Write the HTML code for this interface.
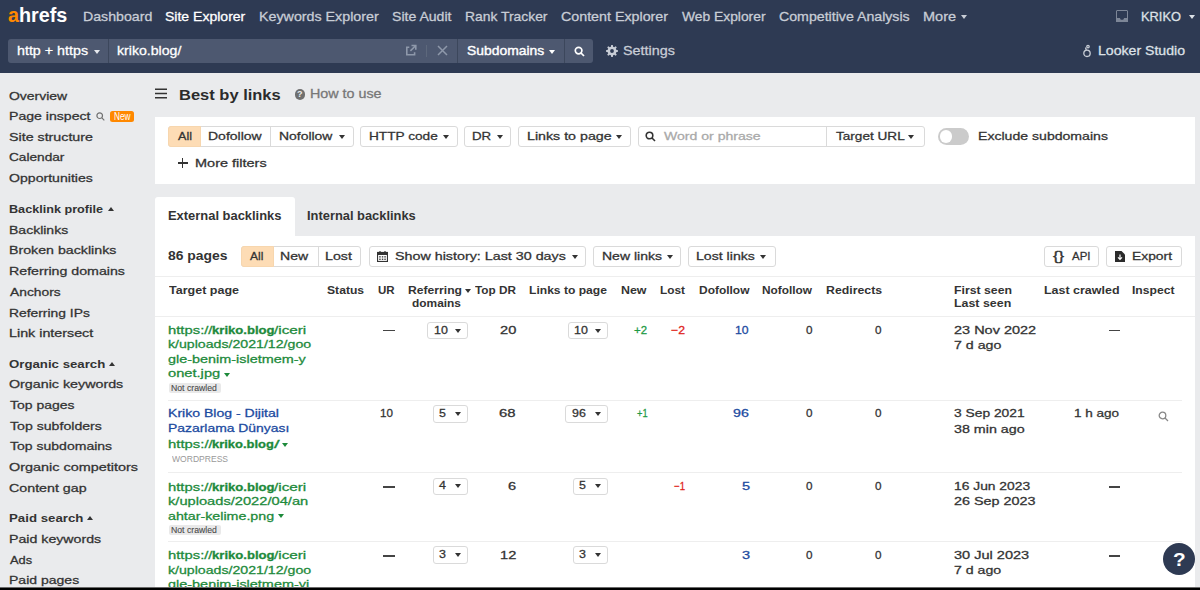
<!DOCTYPE html>
<html><head><meta charset="utf-8"><style>
html,body{margin:0;padding:0;width:1200px;height:590px;overflow:hidden;position:relative;font-family:"Liberation Sans",sans-serif;background:#eaebed}
b{font-weight:700}
</style></head><body>
<div style="position:absolute;left:0;top:0;width:1200px;height:73px;background:#2e3a53"></div>
<svg style="position:absolute;left:961px;top:14.5px" width="6" height="4" viewBox="0 0 6 4"><path d="M0 0H6L3.0 4Z" fill="#c8cdd6"/></svg>
<svg style="position:absolute;left:1189px;top:15px" width="6" height="4" viewBox="0 0 6 4"><path d="M0 0H6L3.0 4Z" fill="#dde1e7"/></svg>
<div style="position:absolute;left:1116px;top:10px;width:12px;height:12px;border:1.6px solid #7d8697;box-sizing:border-box;border-radius:1px"></div><div style="position:absolute;left:1116px;top:17.5px;width:12px;height:4.5px;background:#7d8697;clip-path:polygon(0 0,30% 0,40% 50%,60% 50%,70% 0,100% 0,100% 100%,0 100%)"></div>
<div style="position:absolute;left:8px;top:39px;width:557px;height:24px;background:#4d5870;border-radius:3px 0 0 3px"></div>
<div style="position:absolute;left:108px;top:39px;width:1px;height:24px;background:#3c475c"></div>
<div style="position:absolute;left:457px;top:39px;width:1px;height:24px;background:#3c475c"></div>
<div style="position:absolute;left:565px;top:39px;width:28px;height:24px;background:#4d5870;border-radius:0 3px 3px 0"></div>
<div style="position:absolute;left:564px;top:39px;width:1px;height:24px;background:#3c475c"></div>
<svg style="position:absolute;left:94px;top:49.5px" width="6" height="4" viewBox="0 0 6 4"><path d="M0 0H6L3.0 4Z" fill="#e6e9ee"/></svg>
<svg style="position:absolute;left:549px;top:49.5px" width="6" height="4" viewBox="0 0 6 4"><path d="M0 0H6L3.0 4Z" fill="#fff"/></svg>
<svg style="position:absolute;left:405px;top:44px" width="13" height="13" viewBox="0 0 13 13" fill="none" stroke="#8e98aa" stroke-width="1.6"><path d="M4.3 3.2H1.8V10.8H9.6V8.2"/><path d="M6.5 1.5H10.8V5.8M10.6 1.7L5.4 6.9"/></svg>
<div style="position:absolute;left:426px;top:45px;width:1px;height:12px;background:#5d687c"></div>
<svg style="position:absolute;left:437px;top:45px" width="11" height="11" viewBox="0 0 11 11" stroke="#8e98aa" stroke-width="1.5"><path d="M1 1L10 10M10 1L1 10"/></svg>
<svg style="position:absolute;left:573.5px;top:45.5px" width="11" height="11" viewBox="0 0 11 11" fill="none" stroke="#fff" stroke-width="1.7"><circle cx="4.6" cy="4.6" r="3.3"/><path d="M7 7L10 10"/></svg>
<svg style="position:absolute;left:605.5px;top:44.5px" width="12" height="12" viewBox="0 0 12 12"><path fill-rule="evenodd" d="M11.95 5.20 L11.95 6.80 L10.25 7.13 L9.80 8.21 L10.77 9.64 L9.64 10.77 L8.21 9.80 L7.13 10.25 L6.80 11.95 L5.20 11.95 L4.87 10.25 L3.79 9.80 L2.36 10.77 L1.23 9.64 L2.20 8.21 L1.75 7.13 L0.05 6.80 L0.05 5.20 L1.75 4.87 L2.20 3.79 L1.23 2.36 L2.36 1.23 L3.79 2.20 L4.87 1.75 L5.20 0.05 L6.80 0.05 L7.13 1.75 L8.21 2.20 L9.64 1.23 L10.77 2.36 L9.80 3.79 L10.25 4.87Z M7.90 6 A1.9 1.9 0 1 0 4.10 6 A1.9 1.9 0 1 0 7.90 6Z" fill="#c8cdd6"/></svg>
<svg style="position:absolute;left:1082px;top:44px" width="10" height="14" viewBox="0 0 10 14" fill="none" stroke="#c8cdd6" stroke-width="1.3"><circle cx="5" cy="9.3" r="3.2"/><circle cx="6" cy="2.6" r="1.2"/><path d="M3.5 3.5L4.3 6"/></svg>
<div style="position:absolute;left:0;top:73px;width:1200px;height:517px;background:#eaebed"></div>
<div style="position:absolute;left:107.5px;top:207px;width:0;height:0;border-left:3.0px solid transparent;border-right:3.0px solid transparent;border-bottom:4px solid #333"></div>
<div style="position:absolute;left:109px;top:362px;width:0;height:0;border-left:3.0px solid transparent;border-right:3.0px solid transparent;border-bottom:4px solid #333"></div>
<div style="position:absolute;left:87px;top:516px;width:0;height:0;border-left:3.0px solid transparent;border-right:3.0px solid transparent;border-bottom:4px solid #333"></div>
<svg style="position:absolute;left:96px;top:112px" width="9" height="9" viewBox="0 0 9 9" fill="none" stroke="#707070" stroke-width="1.2"><circle cx="3.7" cy="3.7" r="2.8"/><path d="M5.7 5.7L8.3 8.3"/></svg>
<div style="position:absolute;left:110px;top:111px;width:24px;height:10.5px;background:#ff8800;border-radius:2.5px"></div>
<svg style="position:absolute;left:155px;top:87px" width="12" height="13" viewBox="0 0 12 13"><path d="M0 2.2H12M0 6.5H12M0 10.8H12" stroke="#333" stroke-width="1.6"/></svg>
<div style="position:absolute;left:294.5px;top:89px;width:10.5px;height:10.5px;border-radius:50%;background:#6f6f6f;color:#eaebed;font:bold 9px/10.5px 'Liberation Sans',sans-serif;text-align:center">?</div>
<div style="position:absolute;left:155px;top:117px;width:1040px;height:67px;background:#fff"></div>
<div style="position:absolute;left:168px;top:126px;width:186px;height:21px;box-sizing:border-box;border:1px solid #dadada;background:#fff;border-radius:3px"></div>
<div style="position:absolute;left:168px;top:126px;width:33px;height:21px;box-sizing:border-box;border:1px solid #f7d6ae;border-radius:3px 0 0 3px;background:#fddcb5"></div>
<div style="position:absolute;left:270px;top:127px;width:1px;height:19px;background:#dadada"></div>
<div style="position:absolute;left:360px;top:126px;width:97.5px;height:21px;box-sizing:border-box;border:1px solid #dadada;background:#fff;border-radius:3px"></div>
<div style="position:absolute;left:464px;top:126px;width:47px;height:21px;box-sizing:border-box;border:1px solid #dadada;background:#fff;border-radius:3px"></div>
<div style="position:absolute;left:518px;top:126px;width:112.5px;height:21px;box-sizing:border-box;border:1px solid #dadada;background:#fff;border-radius:3px"></div>
<div style="position:absolute;left:637.7px;top:126px;width:287.29999999999995px;height:21px;box-sizing:border-box;border:1px solid #dadada;background:#fff;border-radius:3px"></div>
<div style="position:absolute;left:826px;top:127px;width:1px;height:19px;background:#dadada"></div>
<svg style="position:absolute;left:338.8px;top:135px" width="6" height="4" viewBox="0 0 6 4"><path d="M0 0H6L3.0 4Z" fill="#333"/></svg>
<svg style="position:absolute;left:443.3px;top:135px" width="6" height="4" viewBox="0 0 6 4"><path d="M0 0H6L3.0 4Z" fill="#333"/></svg>
<svg style="position:absolute;left:497px;top:135px" width="6" height="4" viewBox="0 0 6 4"><path d="M0 0H6L3.0 4Z" fill="#333"/></svg>
<svg style="position:absolute;left:616.3px;top:135px" width="6" height="4" viewBox="0 0 6 4"><path d="M0 0H6L3.0 4Z" fill="#333"/></svg>
<svg style="position:absolute;left:645px;top:131px" width="11" height="11" viewBox="0 0 11 11" fill="none" stroke="#333" stroke-width="1.6"><circle cx="4.5" cy="4.5" r="3.3"/><path d="M7 7L10 10"/></svg>
<svg style="position:absolute;left:908px;top:135px" width="6" height="4" viewBox="0 0 6 4"><path d="M0 0H6L3.0 4Z" fill="#333"/></svg>
<div style="position:absolute;left:938px;top:128px;width:31px;height:17.2px;border-radius:8.6px;background:#cbcbcb"></div><div style="position:absolute;left:939.8px;top:130.2px;width:12.6px;height:12.6px;border-radius:50%;background:#fff"></div>
<div style="position:absolute;left:177.5px;top:162px;width:10px;height:1.6px;background:#333"></div><div style="position:absolute;left:181.7px;top:157.7px;width:1.6px;height:10px;background:#333"></div>
<div style="position:absolute;left:155px;top:197px;width:140px;height:40px;background:#fff;border-radius:3px 3px 0 0"></div>
<div style="position:absolute;left:155px;top:235.5px;width:1040px;height:352px;background:#fff"></div>
<div style="position:absolute;left:240.7px;top:246px;width:120.80000000000001px;height:21px;box-sizing:border-box;border:1px solid #dadada;background:#fff;border-radius:3px"></div>
<div style="position:absolute;left:240.7px;top:246px;width:33px;height:21px;box-sizing:border-box;border:1px solid #f7d6ae;border-radius:3px 0 0 3px;background:#fddcb5"></div>
<div style="position:absolute;left:317.5px;top:247px;width:1px;height:19px;background:#dadada"></div>
<div style="position:absolute;left:368.7px;top:246px;width:217.00000000000006px;height:21px;box-sizing:border-box;border:1px solid #dadada;background:#fff;border-radius:3px"></div>
<svg style="position:absolute;left:376.5px;top:251px" width="11" height="11" viewBox="0 0 11 11"><rect x="0.5" y="1.5" width="10" height="9" fill="none" stroke="#333" stroke-width="1.2"/><rect x="0.5" y="1.5" width="10" height="2.5" fill="#333"/><path d="M3 0v2M8 0v2" stroke="#333" stroke-width="1.2"/><g fill="#333"><rect x="2.2" y="5.2" width="1.5" height="1.3"/><rect x="4.8" y="5.2" width="1.5" height="1.3"/><rect x="7.3" y="5.2" width="1.5" height="1.3"/><rect x="2.2" y="7.6" width="1.5" height="1.3"/><rect x="4.8" y="7.6" width="1.5" height="1.3"/><rect x="7.3" y="7.6" width="1.5" height="1.3"/></g></svg>
<svg style="position:absolute;left:572px;top:254.5px" width="6" height="4" viewBox="0 0 6 4"><path d="M0 0H6L3.0 4Z" fill="#333"/></svg>
<div style="position:absolute;left:592.7px;top:246px;width:88.59999999999991px;height:21px;box-sizing:border-box;border:1px solid #dadada;background:#fff;border-radius:3px"></div>
<svg style="position:absolute;left:667px;top:254.5px" width="6" height="4" viewBox="0 0 6 4"><path d="M0 0H6L3.0 4Z" fill="#333"/></svg>
<div style="position:absolute;left:688.3px;top:246px;width:87.5px;height:21px;box-sizing:border-box;border:1px solid #dadada;background:#fff;border-radius:3px"></div>
<svg style="position:absolute;left:760px;top:254.5px" width="6" height="4" viewBox="0 0 6 4"><path d="M0 0H6L3.0 4Z" fill="#333"/></svg>
<div style="position:absolute;left:1044px;top:246px;width:55.40000000000009px;height:21px;box-sizing:border-box;border:1px solid #dadada;background:#fff;border-radius:3px"></div>
<div style="position:absolute;left:1106.2px;top:246px;width:75.59999999999991px;height:21px;box-sizing:border-box;border:1px solid #dadada;background:#fff;border-radius:3px"></div>
<svg style="position:absolute;left:1115px;top:251px" width="10" height="11" viewBox="0 0 10 11"><path d="M0 0H6.5L10 3.5V11H0Z" fill="#2b2b2b"/><path d="M5 3.5V8M3 6.3L5 8.3 7 6.3" stroke="#fff" stroke-width="1.2" fill="none"/></svg>
<div style="position:absolute;left:155px;top:276px;width:1040px;height:1px;background:#eeeeee"></div>
<svg style="position:absolute;left:464.8px;top:289px" width="6" height="4" viewBox="0 0 6 4"><path d="M0 0H6L3.0 4Z" fill="#333"/></svg>
<div style="position:absolute;left:155px;top:315.5px;width:1040px;height:1px;background:#eeeeee"></div>
<svg style="position:absolute;left:223.5px;top:372.5px" width="6" height="4" viewBox="0 0 6 4"><path d="M0 0H6L3.0 4Z" fill="#1d8a3b"/></svg>
<div style="position:absolute;left:168.5px;top:382.5px;width:52.5px;height:10.0px;background:#e9e9e9;border-radius:2px"></div>
<div style="position:absolute;left:382.7px;top:329.5px;width:12.0px;height:1.5px;background:#444"></div>
<div style="position:absolute;left:427.2px;top:322.2px;width:40.80000000000001px;height:16.80000000000001px;box-sizing:border-box;border:1px solid #dadada;background:#fff;border-radius:3px"></div>
<svg style="position:absolute;left:455px;top:329.0px" width="6" height="4" viewBox="0 0 6 4"><path d="M0 0H6L3.0 4Z" fill="#333"/></svg>
<div style="position:absolute;left:567.5px;top:322.2px;width:40.5px;height:16.80000000000001px;box-sizing:border-box;border:1px solid #dadada;background:#fff;border-radius:3px"></div>
<svg style="position:absolute;left:595px;top:329.0px" width="6" height="4" viewBox="0 0 6 4"><path d="M0 0H6L3.0 4Z" fill="#333"/></svg>
<div style="position:absolute;left:1108.6px;top:329.5px;width:11.200000000000045px;height:1.5px;background:#444"></div>
<div style="position:absolute;left:168px;top:400px;width:1014px;height:1px;background:#eeeeee"></div>
<svg style="position:absolute;left:282px;top:442.5px" width="6" height="4" viewBox="0 0 6 4"><path d="M0 0H6L3.0 4Z" fill="#1d8a3b"/></svg>
<div style="position:absolute;left:432.5px;top:405px;width:35.5px;height:17.5px;box-sizing:border-box;border:1px solid #dadada;background:#fff;border-radius:3px"></div>
<svg style="position:absolute;left:455px;top:411.8px" width="6" height="4" viewBox="0 0 6 4"><path d="M0 0H6L3.0 4Z" fill="#333"/></svg>
<div style="position:absolute;left:565.3px;top:405px;width:43.0px;height:17.5px;box-sizing:border-box;border:1px solid #dadada;background:#fff;border-radius:3px"></div>
<svg style="position:absolute;left:595.3px;top:411.8px" width="6" height="4" viewBox="0 0 6 4"><path d="M0 0H6L3.0 4Z" fill="#333"/></svg>
<svg style="position:absolute;left:1158px;top:411px" width="11" height="11" viewBox="0 0 11 11" fill="none" stroke="#888" stroke-width="1.3"><circle cx="4.5" cy="4.5" r="3.3"/><path d="M7 7L10 10"/></svg>
<div style="position:absolute;left:168px;top:472px;width:1014px;height:1px;background:#eeeeee"></div>
<svg style="position:absolute;left:278px;top:514px" width="6" height="4" viewBox="0 0 6 4"><path d="M0 0H6L3.0 4Z" fill="#1d8a3b"/></svg>
<div style="position:absolute;left:168.5px;top:524.5px;width:52.5px;height:10.0px;background:#e9e9e9;border-radius:2px"></div>
<div style="position:absolute;left:382.7px;top:486px;width:12.0px;height:1.5px;background:#444"></div>
<div style="position:absolute;left:432.5px;top:477.5px;width:35.5px;height:17.80000000000001px;box-sizing:border-box;border:1px solid #dadada;background:#fff;border-radius:3px"></div>
<svg style="position:absolute;left:455px;top:484.3px" width="6" height="4" viewBox="0 0 6 4"><path d="M0 0H6L3.0 4Z" fill="#333"/></svg>
<div style="position:absolute;left:573px;top:477.5px;width:35.299999999999955px;height:17.80000000000001px;box-sizing:border-box;border:1px solid #dadada;background:#fff;border-radius:3px"></div>
<svg style="position:absolute;left:595.3px;top:484.3px" width="6" height="4" viewBox="0 0 6 4"><path d="M0 0H6L3.0 4Z" fill="#333"/></svg>
<div style="position:absolute;left:1108.6px;top:486px;width:11.200000000000045px;height:1.5px;background:#444"></div>
<div style="position:absolute;left:168px;top:541px;width:1014px;height:1px;background:#eeeeee"></div>
<div style="position:absolute;left:382.7px;top:555px;width:12.0px;height:1.5px;background:#444"></div>
<div style="position:absolute;left:432.5px;top:546px;width:35.5px;height:18px;box-sizing:border-box;border:1px solid #dadada;background:#fff;border-radius:3px"></div>
<svg style="position:absolute;left:455px;top:552.8px" width="6" height="4" viewBox="0 0 6 4"><path d="M0 0H6L3.0 4Z" fill="#333"/></svg>
<div style="position:absolute;left:573px;top:546px;width:35.299999999999955px;height:18px;box-sizing:border-box;border:1px solid #dadada;background:#fff;border-radius:3px"></div>
<svg style="position:absolute;left:595.3px;top:552.8px" width="6" height="4" viewBox="0 0 6 4"><path d="M0 0H6L3.0 4Z" fill="#333"/></svg>
<div style="position:absolute;left:1108.6px;top:555px;width:11.200000000000045px;height:1.5px;background:#444"></div>
<div style="position:absolute;left:1163px;top:542.5px;width:32px;height:32px;border-radius:50%;background:#2e3a53"></div>
<div style="position:absolute;left:1195px;top:73px;width:5px;height:514px;background:#eaebed"></div>
<div style="position:absolute;left:7.72px;top:2.30px;font-size:21px;line-height:25px;font-weight:700;color:#fff;letter-spacing:0.0px;white-space:pre;-webkit-text-stroke:0.0px #fff;transform:scaleX(0.9418);transform-origin:0 0;"><span style="color:#ff8800">a</span>hrefs</div>
<div style="position:absolute;left:83.34px;top:9.00px;font-size:13px;line-height:16px;font-weight:400;color:#c8cdd6;letter-spacing:0.0px;white-space:pre;-webkit-text-stroke:0.28px #c8cdd6;transform:scaleX(1.0897);transform-origin:0 0;">Dashboard</div>
<div style="position:absolute;left:165.22px;top:9.00px;font-size:13px;line-height:16px;font-weight:400;color:#fff;letter-spacing:0.0px;white-space:pre;-webkit-text-stroke:0.28px #fff;transform:scaleX(1.0789);transform-origin:0 0;">Site Explorer</div>
<div style="position:absolute;left:258.90px;top:9.00px;font-size:13px;line-height:16px;font-weight:400;color:#c8cdd6;letter-spacing:0.0px;white-space:pre;-webkit-text-stroke:0.28px #c8cdd6;transform:scaleX(1.0971);transform-origin:0 0;">Keywords Explorer</div>
<div style="position:absolute;left:391.63px;top:9.00px;font-size:13px;line-height:16px;font-weight:400;color:#c8cdd6;letter-spacing:0.0px;white-space:pre;-webkit-text-stroke:0.28px #c8cdd6;transform:scaleX(1.0832);transform-origin:0 0;">Site Audit</div>
<div style="position:absolute;left:464.64px;top:9.00px;font-size:13px;line-height:16px;font-weight:400;color:#c8cdd6;letter-spacing:0.0px;white-space:pre;-webkit-text-stroke:0.28px #c8cdd6;transform:scaleX(1.0667);transform-origin:0 0;">Rank Tracker</div>
<div style="position:absolute;left:560.50px;top:9.00px;font-size:13px;line-height:16px;font-weight:400;color:#c8cdd6;letter-spacing:0.0px;white-space:pre;-webkit-text-stroke:0.28px #c8cdd6;transform:scaleX(1.0968);transform-origin:0 0;">Content Explorer</div>
<div style="position:absolute;left:681.91px;top:9.00px;font-size:13px;line-height:16px;font-weight:400;color:#c8cdd6;letter-spacing:0.0px;white-space:pre;-webkit-text-stroke:0.28px #c8cdd6;transform:scaleX(1.0635);transform-origin:0 0;">Web Explorer</div>
<div style="position:absolute;left:778.91px;top:9.00px;font-size:13px;line-height:16px;font-weight:400;color:#c8cdd6;letter-spacing:0.0px;white-space:pre;-webkit-text-stroke:0.28px #c8cdd6;transform:scaleX(1.0896);transform-origin:0 0;">Competitive Analysis</div>
<div style="position:absolute;left:922.90px;top:9.00px;font-size:13px;line-height:16px;font-weight:400;color:#c8cdd6;letter-spacing:0.0px;white-space:pre;-webkit-text-stroke:0.28px #c8cdd6;transform:scaleX(1.1162);transform-origin:0 0;">More</div>
<div style="position:absolute;left:1141.13px;top:9.00px;font-size:13px;line-height:16px;font-weight:400;color:#dde1e7;letter-spacing:0.0px;white-space:pre;-webkit-text-stroke:0.28px #dde1e7;transform:scaleX(0.9881);transform-origin:0 0;">KRIKO</div>
<div style="position:absolute;left:16.62px;top:43.00px;font-size:13px;line-height:16px;font-weight:400;color:#fff;letter-spacing:0.0px;white-space:pre;-webkit-text-stroke:0.28px #fff;transform:scaleX(1.0979);transform-origin:0 0;">http + https</div>
<div style="position:absolute;left:117.36px;top:43.00px;font-size:13px;line-height:16px;font-weight:400;color:#fff;letter-spacing:0.0px;white-space:pre;-webkit-text-stroke:0.28px #fff;transform:scaleX(1.0853);transform-origin:0 0;">kriko.blog/</div>
<div style="position:absolute;left:466.51px;top:43.00px;font-size:13px;line-height:16px;font-weight:400;color:#fff;letter-spacing:0.0px;white-space:pre;-webkit-text-stroke:0.28px #fff;transform:scaleX(1.0677);transform-origin:0 0;-webkit-text-stroke:0.4px #fff;">Subdomains</div>
<div style="position:absolute;left:622.62px;top:43.00px;font-size:13px;line-height:16px;font-weight:400;color:#c8cdd6;letter-spacing:0.0px;white-space:pre;-webkit-text-stroke:0.28px #c8cdd6;transform:scaleX(1.1031);transform-origin:0 0;">Settings</div>
<div style="position:absolute;left:1097.63px;top:43.00px;font-size:13px;line-height:16px;font-weight:400;color:#dde1e7;letter-spacing:0.0px;white-space:pre;-webkit-text-stroke:0.28px #dde1e7;transform:scaleX(1.0844);transform-origin:0 0;">Looker Studio</div>
<div style="position:absolute;left:8.55px;top:88.60px;font-size:11.5px;line-height:14px;font-weight:400;color:#333;letter-spacing:0.0px;white-space:pre;-webkit-text-stroke:0.28px #333;transform:scaleX(1.2144);transform-origin:0 0;">Overview</div>
<div style="position:absolute;left:8.55px;top:109.00px;font-size:11.5px;line-height:14px;font-weight:400;color:#333;letter-spacing:0.0px;white-space:pre;-webkit-text-stroke:0.28px #333;transform:scaleX(1.2247);transform-origin:0 0;">Page inspect</div>
<div style="position:absolute;left:8.54px;top:130.10px;font-size:11.5px;line-height:14px;font-weight:400;color:#333;letter-spacing:0.0px;white-space:pre;-webkit-text-stroke:0.28px #333;transform:scaleX(1.2391);transform-origin:0 0;">Site structure</div>
<div style="position:absolute;left:8.56px;top:150.40px;font-size:11.5px;line-height:14px;font-weight:400;color:#333;letter-spacing:0.0px;white-space:pre;-webkit-text-stroke:0.28px #333;transform:scaleX(1.1871);transform-origin:0 0;">Calendar</div>
<div style="position:absolute;left:8.55px;top:171.10px;font-size:11.5px;line-height:14px;font-weight:400;color:#333;letter-spacing:0.0px;white-space:pre;-webkit-text-stroke:0.28px #333;transform:scaleX(1.2257);transform-origin:0 0;">Opportunities</div>
<div style="position:absolute;left:8.61px;top:201.80px;font-size:11.5px;line-height:14px;font-weight:700;color:#333;letter-spacing:0.0px;white-space:pre;-webkit-text-stroke:0.0px #333;transform:scaleX(1.0978);transform-origin:0 0;">Backlink profile</div>
<div style="position:absolute;left:8.54px;top:222.80px;font-size:11.5px;line-height:14px;font-weight:400;color:#333;letter-spacing:0.0px;white-space:pre;-webkit-text-stroke:0.28px #333;transform:scaleX(1.2175);transform-origin:0 0;">Backlinks</div>
<div style="position:absolute;left:8.54px;top:243.00px;font-size:11.5px;line-height:14px;font-weight:400;color:#333;letter-spacing:0.0px;white-space:pre;-webkit-text-stroke:0.28px #333;transform:scaleX(1.2348);transform-origin:0 0;">Broken backlinks</div>
<div style="position:absolute;left:8.53px;top:264.40px;font-size:11.5px;line-height:14px;font-weight:400;color:#333;letter-spacing:0.0px;white-space:pre;-webkit-text-stroke:0.28px #333;transform:scaleX(1.2339);transform-origin:0 0;">Referring domains</div>
<div style="position:absolute;left:9.54px;top:285.00px;font-size:11.5px;line-height:14px;font-weight:400;color:#333;letter-spacing:0.0px;white-space:pre;-webkit-text-stroke:0.28px #333;transform:scaleX(1.2004);transform-origin:0 0;">Anchors</div>
<div style="position:absolute;left:8.55px;top:305.70px;font-size:11.5px;line-height:14px;font-weight:400;color:#333;letter-spacing:0.0px;white-space:pre;-webkit-text-stroke:0.28px #333;transform:scaleX(1.2042);transform-origin:0 0;">Referring IPs</div>
<div style="position:absolute;left:8.53px;top:326.00px;font-size:11.5px;line-height:14px;font-weight:400;color:#333;letter-spacing:0.0px;white-space:pre;-webkit-text-stroke:0.28px #333;transform:scaleX(1.2432);transform-origin:0 0;">Link intersect</div>
<div style="position:absolute;left:8.59px;top:357.00px;font-size:11.5px;line-height:14px;font-weight:700;color:#333;letter-spacing:0.0px;white-space:pre;-webkit-text-stroke:0.0px #333;transform:scaleX(1.1497);transform-origin:0 0;">Organic search</div>
<div style="position:absolute;left:8.54px;top:377.20px;font-size:11.5px;line-height:14px;font-weight:400;color:#333;letter-spacing:0.0px;white-space:pre;-webkit-text-stroke:0.28px #333;transform:scaleX(1.2411);transform-origin:0 0;">Organic keywords</div>
<div style="position:absolute;left:9.55px;top:398.30px;font-size:11.5px;line-height:14px;font-weight:400;color:#333;letter-spacing:0.0px;white-space:pre;-webkit-text-stroke:0.28px #333;transform:scaleX(1.2160);transform-origin:0 0;">Top pages</div>
<div style="position:absolute;left:9.54px;top:418.70px;font-size:11.5px;line-height:14px;font-weight:400;color:#333;letter-spacing:0.0px;white-space:pre;-webkit-text-stroke:0.28px #333;transform:scaleX(1.2280);transform-origin:0 0;">Top subfolders</div>
<div style="position:absolute;left:9.54px;top:439.30px;font-size:11.5px;line-height:14px;font-weight:400;color:#333;letter-spacing:0.0px;white-space:pre;-webkit-text-stroke:0.28px #333;transform:scaleX(1.2195);transform-origin:0 0;">Top subdomains</div>
<div style="position:absolute;left:8.53px;top:460.40px;font-size:11.5px;line-height:14px;font-weight:400;color:#333;letter-spacing:0.0px;white-space:pre;-webkit-text-stroke:0.28px #333;transform:scaleX(1.2532);transform-origin:0 0;">Organic competitors</div>
<div style="position:absolute;left:8.53px;top:480.70px;font-size:11.5px;line-height:14px;font-weight:400;color:#333;letter-spacing:0.0px;white-space:pre;-webkit-text-stroke:0.28px #333;transform:scaleX(1.2391);transform-origin:0 0;">Content gap</div>
<div style="position:absolute;left:8.59px;top:511.20px;font-size:11.5px;line-height:14px;font-weight:700;color:#333;letter-spacing:0.0px;white-space:pre;-webkit-text-stroke:0.0px #333;transform:scaleX(1.1516);transform-origin:0 0;">Paid search</div>
<div style="position:absolute;left:8.54px;top:531.50px;font-size:11.5px;line-height:14px;font-weight:400;color:#333;letter-spacing:0.0px;white-space:pre;-webkit-text-stroke:0.28px #333;transform:scaleX(1.2320);transform-origin:0 0;">Paid keywords</div>
<div style="position:absolute;left:9.58px;top:552.60px;font-size:11.5px;line-height:14px;font-weight:400;color:#333;letter-spacing:0.0px;white-space:pre;-webkit-text-stroke:0.28px #333;transform:scaleX(1.1177);transform-origin:0 0;">Ads</div>
<div style="position:absolute;left:8.54px;top:573.40px;font-size:11.5px;line-height:14px;font-weight:400;color:#333;letter-spacing:0.0px;white-space:pre;-webkit-text-stroke:0.28px #333;transform:scaleX(1.2189);transform-origin:0 0;">Paid pages</div>
<div style="position:absolute;left:113.85px;top:110.60px;font-size:10px;line-height:12px;font-weight:400;color:#fff;letter-spacing:0.0px;white-space:pre;-webkit-text-stroke:0.28px #fff;transform:scaleX(0.8240);transform-origin:0 0;-webkit-text-stroke:0;">New</div>
<div style="position:absolute;left:179.49px;top:85.50px;font-size:15px;line-height:18px;font-weight:700;color:#2b2b2b;letter-spacing:0.0px;white-space:pre;-webkit-text-stroke:0.0px #2b2b2b;transform:scaleX(1.0991);transform-origin:0 0;">Best by links</div>
<div style="position:absolute;left:310.31px;top:87.00px;font-size:12.5px;line-height:15px;font-weight:400;color:#777;letter-spacing:0.0px;white-space:pre;-webkit-text-stroke:0.28px #777;transform:scaleX(1.1443);transform-origin:0 0;">How to use</div>
<div style="position:absolute;left:177.53px;top:129.40px;font-size:11.5px;line-height:14px;font-weight:400;color:#333;letter-spacing:0.0px;white-space:pre;-webkit-text-stroke:0.28px #333;transform:scaleX(1.0940);transform-origin:0 0;">All</div>
<div style="position:absolute;left:207.55px;top:129.40px;font-size:11.5px;line-height:14px;font-weight:400;color:#333;letter-spacing:0.0px;white-space:pre;-webkit-text-stroke:0.28px #333;transform:scaleX(1.2162);transform-origin:0 0;">Dofollow</div>
<div style="position:absolute;left:279.27px;top:129.40px;font-size:11.5px;line-height:14px;font-weight:400;color:#333;letter-spacing:0.0px;white-space:pre;-webkit-text-stroke:0.28px #333;transform:scaleX(1.2113);transform-origin:0 0;">Nofollow</div>
<div style="position:absolute;left:368.85px;top:129.40px;font-size:11.5px;line-height:14px;font-weight:400;color:#333;letter-spacing:0.0px;white-space:pre;-webkit-text-stroke:0.28px #333;transform:scaleX(1.1873);transform-origin:0 0;">HTTP code</div>
<div style="position:absolute;left:472.41px;top:129.40px;font-size:11.5px;line-height:14px;font-weight:400;color:#333;letter-spacing:0.0px;white-space:pre;-webkit-text-stroke:0.28px #333;transform:scaleX(1.1560);transform-origin:0 0;">DR</div>
<div style="position:absolute;left:526.53px;top:129.40px;font-size:11.5px;line-height:14px;font-weight:400;color:#333;letter-spacing:0.0px;white-space:pre;-webkit-text-stroke:0.28px #333;transform:scaleX(1.2373);transform-origin:0 0;">Links to page</div>
<div style="position:absolute;left:663.54px;top:129.40px;font-size:11.5px;line-height:14px;font-weight:400;color:#a9a9a9;letter-spacing:0.0px;white-space:pre;-webkit-text-stroke:0.28px #a9a9a9;transform:scaleX(1.2225);transform-origin:0 0;">Word or phrase</div>
<div style="position:absolute;left:835.56px;top:129.40px;font-size:11.5px;line-height:14px;font-weight:400;color:#333;letter-spacing:0.0px;white-space:pre;-webkit-text-stroke:0.28px #333;transform:scaleX(1.1812);transform-origin:0 0;">Target URL</div>
<div style="position:absolute;left:977.71px;top:129.40px;font-size:11.5px;line-height:14px;font-weight:400;color:#333;letter-spacing:0.0px;white-space:pre;-webkit-text-stroke:0.28px #333;transform:scaleX(1.2244);transform-origin:0 0;">Exclude subdomains</div>
<div style="position:absolute;left:194.53px;top:156.00px;font-size:11.5px;line-height:14px;font-weight:400;color:#333;letter-spacing:0.0px;white-space:pre;-webkit-text-stroke:0.28px #333;transform:scaleX(1.2601);transform-origin:0 0;">More filters</div>
<div style="position:absolute;left:167.91px;top:209.30px;font-size:12px;line-height:14px;font-weight:700;color:#333;letter-spacing:0.0px;white-space:pre;-webkit-text-stroke:0.0px #333;transform:scaleX(1.0768);transform-origin:0 0;">External backlinks</div>
<div style="position:absolute;left:307.23px;top:209.30px;font-size:12px;line-height:14px;font-weight:700;color:#333;letter-spacing:0.0px;white-space:pre;-webkit-text-stroke:0.0px #333;transform:scaleX(1.0731);transform-origin:0 0;">Internal backlinks</div>
<div style="position:absolute;left:167.58px;top:248.80px;font-size:12px;line-height:14px;font-weight:700;color:#333;letter-spacing:0.0px;white-space:pre;-webkit-text-stroke:0.0px #333;transform:scaleX(1.1595);transform-origin:0 0;">86 pages</div>
<div style="position:absolute;left:250.17px;top:248.80px;font-size:11.5px;line-height:14px;font-weight:400;color:#333;letter-spacing:0.0px;white-space:pre;-webkit-text-stroke:0.28px #333;transform:scaleX(1.0423);transform-origin:0 0;">All</div>
<div style="position:absolute;left:280.42px;top:248.80px;font-size:11.5px;line-height:14px;font-weight:400;color:#333;letter-spacing:0.0px;white-space:pre;-webkit-text-stroke:0.28px #333;transform:scaleX(1.2230);transform-origin:0 0;">New</div>
<div style="position:absolute;left:325.43px;top:248.80px;font-size:11.5px;line-height:14px;font-weight:400;color:#333;letter-spacing:0.0px;white-space:pre;-webkit-text-stroke:0.28px #333;transform:scaleX(1.2347);transform-origin:0 0;">Lost</div>
<div style="position:absolute;left:395.42px;top:248.80px;font-size:11.5px;line-height:14px;font-weight:400;color:#333;letter-spacing:0.0px;white-space:pre;-webkit-text-stroke:0.28px #333;transform:scaleX(1.2431);transform-origin:0 0;">Show history: Last 30 days</div>
<div style="position:absolute;left:601.53px;top:248.80px;font-size:11.5px;line-height:14px;font-weight:400;color:#333;letter-spacing:0.0px;white-space:pre;-webkit-text-stroke:0.28px #333;transform:scaleX(1.2177);transform-origin:0 0;">New links</div>
<div style="position:absolute;left:696.41px;top:248.80px;font-size:11.5px;line-height:14px;font-weight:400;color:#333;letter-spacing:0.0px;white-space:pre;-webkit-text-stroke:0.28px #333;transform:scaleX(1.2277);transform-origin:0 0;">Lost links</div>
<div style="position:absolute;left:1052.53px;top:248.80px;font-size:12.5px;line-height:15px;font-weight:400;color:#333;letter-spacing:0.0px;white-space:pre;-webkit-text-stroke:0.28px #333;transform:scaleX(1.3381);transform-origin:0 0;-webkit-text-stroke:0.35px #333;">{}</div>
<div style="position:absolute;left:1071.68px;top:248.80px;font-size:11.5px;line-height:14px;font-weight:400;color:#333;letter-spacing:0.0px;white-space:pre;-webkit-text-stroke:0.28px #333;transform:scaleX(0.9967);transform-origin:0 0;">API</div>
<div style="position:absolute;left:1132.47px;top:248.80px;font-size:11.5px;line-height:14px;font-weight:400;color:#333;letter-spacing:0.0px;white-space:pre;-webkit-text-stroke:0.28px #333;transform:scaleX(1.2041);transform-origin:0 0;">Export</div>
<div style="position:absolute;left:168.61px;top:283.30px;font-size:11.5px;line-height:14px;font-weight:700;color:#333;letter-spacing:0.0px;white-space:pre;-webkit-text-stroke:0.0px #333;transform:scaleX(1.0884);transform-origin:0 0;">Target page</div>
<div style="position:absolute;left:326.51px;top:283.30px;font-size:11.5px;line-height:14px;font-weight:700;color:#333;letter-spacing:0.0px;white-space:pre;-webkit-text-stroke:0.0px #333;transform:scaleX(1.0554);transform-origin:0 0;">Status</div>
<div style="position:absolute;left:377.55px;top:283.30px;font-size:11.5px;line-height:14px;font-weight:700;color:#333;letter-spacing:0.0px;white-space:pre;-webkit-text-stroke:0.0px #333;transform:scaleX(1.0035);transform-origin:0 0;">UR</div>
<div style="position:absolute;left:407.52px;top:283.30px;font-size:11.5px;line-height:14px;font-weight:700;color:#333;letter-spacing:0.0px;white-space:pre;-webkit-text-stroke:0.0px #333;transform:scaleX(1.0560);transform-origin:0 0;">Referring</div>
<div style="position:absolute;left:475.24px;top:283.30px;font-size:11.5px;line-height:14px;font-weight:700;color:#333;letter-spacing:0.0px;white-space:pre;-webkit-text-stroke:0.0px #333;transform:scaleX(1.0227);transform-origin:0 0;">Top DR</div>
<div style="position:absolute;left:529.24px;top:283.30px;font-size:11.5px;line-height:14px;font-weight:700;color:#333;letter-spacing:0.0px;white-space:pre;-webkit-text-stroke:0.0px #333;transform:scaleX(1.0519);transform-origin:0 0;">Links to page</div>
<div style="position:absolute;left:621.24px;top:283.30px;font-size:11.5px;line-height:14px;font-weight:700;color:#333;letter-spacing:0.0px;white-space:pre;-webkit-text-stroke:0.0px #333;transform:scaleX(1.0798);transform-origin:0 0;">New</div>
<div style="position:absolute;left:660.23px;top:283.30px;font-size:11.5px;line-height:14px;font-weight:700;color:#333;letter-spacing:0.0px;white-space:pre;-webkit-text-stroke:0.0px #333;transform:scaleX(1.0296);transform-origin:0 0;">Lost</div>
<div style="position:absolute;left:698.66px;top:283.30px;font-size:11.5px;line-height:14px;font-weight:700;color:#333;letter-spacing:0.0px;white-space:pre;-webkit-text-stroke:0.0px #333;transform:scaleX(1.0392);transform-origin:0 0;">Dofollow</div>
<div style="position:absolute;left:762.38px;top:283.30px;font-size:11.5px;line-height:14px;font-weight:700;color:#333;letter-spacing:0.0px;white-space:pre;-webkit-text-stroke:0.0px #333;transform:scaleX(1.0306);transform-origin:0 0;">Nofollow</div>
<div style="position:absolute;left:825.92px;top:283.30px;font-size:11.5px;line-height:14px;font-weight:700;color:#333;letter-spacing:0.0px;white-space:pre;-webkit-text-stroke:0.0px #333;transform:scaleX(1.0702);transform-origin:0 0;">Redirects</div>
<div style="position:absolute;left:953.92px;top:283.30px;font-size:11.5px;line-height:14px;font-weight:700;color:#333;letter-spacing:0.0px;white-space:pre;-webkit-text-stroke:0.0px #333;transform:scaleX(1.0677);transform-origin:0 0;">First seen</div>
<div style="position:absolute;left:1043.91px;top:283.30px;font-size:11.5px;line-height:14px;font-weight:700;color:#333;letter-spacing:0.0px;white-space:pre;-webkit-text-stroke:0.0px #333;transform:scaleX(1.0838);transform-origin:0 0;">Last crawled</div>
<div style="position:absolute;left:1132.23px;top:283.30px;font-size:11.5px;line-height:14px;font-weight:700;color:#333;letter-spacing:0.0px;white-space:pre;-webkit-text-stroke:0.0px #333;transform:scaleX(1.0553);transform-origin:0 0;">Inspect</div>
<div style="position:absolute;left:411.66px;top:296.30px;font-size:11.5px;line-height:14px;font-weight:700;color:#333;letter-spacing:0.0px;white-space:pre;-webkit-text-stroke:0.0px #333;transform:scaleX(1.0354);transform-origin:0 0;">domains</div>
<div style="position:absolute;left:953.92px;top:296.30px;font-size:11.5px;line-height:14px;font-weight:700;color:#333;letter-spacing:0.0px;white-space:pre;-webkit-text-stroke:0.0px #333;transform:scaleX(1.0782);transform-origin:0 0;">Last seen</div>
<div style="position:absolute;left:167.51px;top:322.70px;font-size:11.5px;line-height:14px;font-weight:400;color:#1d8a3b;letter-spacing:0.0px;white-space:pre;-webkit-text-stroke:0.28px #1d8a3b;transform:scaleX(1.2890);transform-origin:0 0;">https://</div>
<div style="position:absolute;left:211.98px;top:322.70px;font-size:11.5px;line-height:14px;font-weight:700;color:#1d8a3b;letter-spacing:0.0px;white-space:pre;-webkit-text-stroke:0.0px #1d8a3b;transform:scaleX(1.1384);transform-origin:0 0;-webkit-text-stroke:0.3px #1d8a3b;">kriko.blog</div>
<div style="position:absolute;left:273.85px;top:322.70px;font-size:11.5px;line-height:14px;font-weight:400;color:#1d8a3b;letter-spacing:0.0px;white-space:pre;-webkit-text-stroke:0.28px #1d8a3b;transform:scaleX(1.3279);transform-origin:0 0;">/iceri</div>
<div style="position:absolute;left:167.54px;top:337.20px;font-size:11.5px;line-height:14px;font-weight:400;color:#1d8a3b;letter-spacing:0.0px;white-space:pre;-webkit-text-stroke:0.28px #1d8a3b;transform:scaleX(1.2298);transform-origin:0 0;">k/uploads/2021/12/goo</div>
<div style="position:absolute;left:167.53px;top:351.70px;font-size:11.5px;line-height:14px;font-weight:400;color:#1d8a3b;letter-spacing:0.0px;white-space:pre;-webkit-text-stroke:0.28px #1d8a3b;transform:scaleX(1.2524);transform-origin:0 0;">gle-benim-isletmem-y</div>
<div style="position:absolute;left:167.52px;top:366.20px;font-size:11.5px;line-height:14px;font-weight:400;color:#1d8a3b;letter-spacing:0.0px;white-space:pre;-webkit-text-stroke:0.28px #1d8a3b;transform:scaleX(1.2753);transform-origin:0 0;">onet.jpg</div>
<div style="position:absolute;left:170.57px;top:381.70px;font-size:9.5px;line-height:11px;font-weight:400;color:#4a4a4a;letter-spacing:0.0px;white-space:pre;-webkit-text-stroke:0.28px #4a4a4a;transform:scaleX(0.9160);transform-origin:0 0;-webkit-text-stroke:0.1px #4a4a4a;">Not crawled</div>
<div style="position:absolute;left:433.55px;top:323.10px;font-size:11.5px;line-height:14px;font-weight:400;color:#333;letter-spacing:0.0px;white-space:pre;-webkit-text-stroke:0.28px #333;transform:scaleX(1.0800);transform-origin:0 0;">10</div>
<div style="position:absolute;left:500.24px;top:322.90px;font-size:11.5px;line-height:14px;font-weight:400;color:#333;letter-spacing:0.0px;white-space:pre;-webkit-text-stroke:0.28px #333;transform:scaleX(1.2715);transform-origin:0 0;">20</div>
<div style="position:absolute;left:573.85px;top:323.10px;font-size:11.5px;line-height:14px;font-weight:400;color:#333;letter-spacing:0.0px;white-space:pre;-webkit-text-stroke:0.28px #333;transform:scaleX(1.0800);transform-origin:0 0;">10</div>
<div style="position:absolute;left:633.71px;top:322.90px;font-size:11.5px;line-height:14px;font-weight:400;color:#1e9a45;letter-spacing:0.0px;white-space:pre;-webkit-text-stroke:0.28px #1e9a45;transform:scaleX(0.9924);transform-origin:0 0;">+2</div>
<div style="position:absolute;left:671.44px;top:322.90px;font-size:11.5px;line-height:14px;font-weight:400;color:#e0241b;letter-spacing:0.0px;white-space:pre;-webkit-text-stroke:0.28px #e0241b;transform:scaleX(1.0649);transform-origin:0 0;">−2</div>
<div style="position:absolute;left:735.23px;top:322.90px;font-size:11.5px;line-height:14px;font-weight:400;color:#1b4aa0;letter-spacing:0.0px;white-space:pre;-webkit-text-stroke:0.28px #1b4aa0;transform:scaleX(1.0616);transform-origin:0 0;">10</div>
<div style="position:absolute;left:806.26px;top:322.90px;font-size:11.5px;line-height:14px;font-weight:400;color:#333;letter-spacing:0.0px;white-space:pre;-webkit-text-stroke:0.28px #333;transform:scaleX(1.0166);transform-origin:0 0;">0</div>
<div style="position:absolute;left:875.36px;top:322.90px;font-size:11.5px;line-height:14px;font-weight:400;color:#333;letter-spacing:0.0px;white-space:pre;-webkit-text-stroke:0.28px #333;transform:scaleX(1.0166);transform-origin:0 0;">0</div>
<div style="position:absolute;left:953.52px;top:322.90px;font-size:11.5px;line-height:14px;font-weight:400;color:#333;letter-spacing:0.0px;white-space:pre;-webkit-text-stroke:0.28px #333;transform:scaleX(1.2601);transform-origin:0 0;">23 Nov 2022</div>
<div style="position:absolute;left:953.54px;top:337.50px;font-size:11.5px;line-height:14px;font-weight:400;color:#333;letter-spacing:0.0px;white-space:pre;-webkit-text-stroke:0.28px #333;transform:scaleX(1.2344);transform-origin:0 0;">7 d ago</div>
<div style="position:absolute;left:167.55px;top:406.20px;font-size:11.5px;line-height:14px;font-weight:400;color:#1b4aa0;letter-spacing:0.0px;white-space:pre;-webkit-text-stroke:0.28px #1b4aa0;transform:scaleX(1.2224);transform-origin:0 0;">Kriko Blog - Dijital</div>
<div style="position:absolute;left:167.55px;top:420.80px;font-size:11.5px;line-height:14px;font-weight:400;color:#1b4aa0;letter-spacing:0.0px;white-space:pre;-webkit-text-stroke:0.28px #1b4aa0;transform:scaleX(1.2089);transform-origin:0 0;">Pazarlama Dünyası</div>
<div style="position:absolute;left:167.77px;top:436.60px;font-size:11.5px;line-height:14px;font-weight:400;color:#1d8a3b;letter-spacing:0.0px;white-space:pre;-webkit-text-stroke:0.28px #1d8a3b;transform:scaleX(1.2951);transform-origin:0 0;">https://</div>
<div style="position:absolute;left:212.25px;top:436.60px;font-size:11.5px;line-height:14px;font-weight:700;color:#1d8a3b;letter-spacing:0.0px;white-space:pre;-webkit-text-stroke:0.0px #1d8a3b;transform:scaleX(1.1271);transform-origin:0 0;-webkit-text-stroke:0.3px #1d8a3b;">kriko.blog</div>
<div style="position:absolute;left:273.76px;top:436.60px;font-size:11.5px;line-height:14px;font-weight:400;color:#1d8a3b;letter-spacing:0.0px;white-space:pre;-webkit-text-stroke:0.28px #1d8a3b;transform:scaleX(1.7669);transform-origin:0 0;">/</div>
<div style="position:absolute;left:171.98px;top:454.20px;font-size:9px;line-height:11px;font-weight:400;color:#999;letter-spacing:0.0px;white-space:pre;-webkit-text-stroke:0.28px #999;transform:scaleX(0.9502);transform-origin:0 0;-webkit-text-stroke:0;">WORDPRESS</div>
<div style="position:absolute;left:380.34px;top:406.30px;font-size:11.5px;line-height:14px;font-weight:400;color:#333;letter-spacing:0.0px;white-space:pre;-webkit-text-stroke:0.28px #333;transform:scaleX(1.0107);transform-origin:0 0;">10</div>
<div style="position:absolute;left:438.85px;top:405.90px;font-size:11.5px;line-height:14px;font-weight:400;color:#333;letter-spacing:0.0px;white-space:pre;-webkit-text-stroke:0.28px #333;transform:scaleX(1.0800);transform-origin:0 0;">5</div>
<div style="position:absolute;left:499.48px;top:406.30px;font-size:11.5px;line-height:14px;font-weight:400;color:#333;letter-spacing:0.0px;white-space:pre;-webkit-text-stroke:0.28px #333;transform:scaleX(1.2960);transform-origin:0 0;">68</div>
<div style="position:absolute;left:571.65px;top:405.90px;font-size:11.5px;line-height:14px;font-weight:400;color:#333;letter-spacing:0.0px;white-space:pre;-webkit-text-stroke:0.28px #333;transform:scaleX(1.0800);transform-origin:0 0;">96</div>
<div style="position:absolute;left:636.54px;top:406.30px;font-size:11.5px;line-height:14px;font-weight:400;color:#1e9a45;letter-spacing:0.0px;white-space:pre;-webkit-text-stroke:0.28px #1e9a45;transform:scaleX(0.8062);transform-origin:0 0;">+1</div>
<div style="position:absolute;left:732.54px;top:406.30px;font-size:11.5px;line-height:14px;font-weight:400;color:#1b4aa0;letter-spacing:0.0px;white-space:pre;-webkit-text-stroke:0.28px #1b4aa0;transform:scaleX(1.2406);transform-origin:0 0;">96</div>
<div style="position:absolute;left:806.26px;top:406.30px;font-size:11.5px;line-height:14px;font-weight:400;color:#333;letter-spacing:0.0px;white-space:pre;-webkit-text-stroke:0.28px #333;transform:scaleX(1.0166);transform-origin:0 0;">0</div>
<div style="position:absolute;left:875.36px;top:406.30px;font-size:11.5px;line-height:14px;font-weight:400;color:#333;letter-spacing:0.0px;white-space:pre;-webkit-text-stroke:0.28px #333;transform:scaleX(1.0166);transform-origin:0 0;">0</div>
<div style="position:absolute;left:953.56px;top:406.30px;font-size:11.5px;line-height:14px;font-weight:400;color:#333;letter-spacing:0.0px;white-space:pre;-webkit-text-stroke:0.28px #333;transform:scaleX(1.2002);transform-origin:0 0;">3 Sep 2021</div>
<div style="position:absolute;left:953.53px;top:421.50px;font-size:11.5px;line-height:14px;font-weight:400;color:#333;letter-spacing:0.0px;white-space:pre;-webkit-text-stroke:0.28px #333;transform:scaleX(1.2418);transform-origin:0 0;">38 min ago</div>
<div style="position:absolute;left:1074.28px;top:406.30px;font-size:11.5px;line-height:14px;font-weight:400;color:#333;letter-spacing:0.0px;white-space:pre;-webkit-text-stroke:0.28px #333;transform:scaleX(1.1756);transform-origin:0 0;">1 h ago</div>
<div style="position:absolute;left:167.51px;top:479.50px;font-size:11.5px;line-height:14px;font-weight:400;color:#1d8a3b;letter-spacing:0.0px;white-space:pre;-webkit-text-stroke:0.28px #1d8a3b;transform:scaleX(1.2890);transform-origin:0 0;">https://</div>
<div style="position:absolute;left:211.98px;top:479.50px;font-size:11.5px;line-height:14px;font-weight:700;color:#1d8a3b;letter-spacing:0.0px;white-space:pre;-webkit-text-stroke:0.0px #1d8a3b;transform:scaleX(1.1384);transform-origin:0 0;-webkit-text-stroke:0.3px #1d8a3b;">kriko.blog</div>
<div style="position:absolute;left:273.85px;top:479.50px;font-size:11.5px;line-height:14px;font-weight:400;color:#1d8a3b;letter-spacing:0.0px;white-space:pre;-webkit-text-stroke:0.28px #1d8a3b;transform:scaleX(1.3279);transform-origin:0 0;">/iceri</div>
<div style="position:absolute;left:167.52px;top:494.00px;font-size:11.5px;line-height:14px;font-weight:400;color:#1d8a3b;letter-spacing:0.0px;white-space:pre;-webkit-text-stroke:0.28px #1d8a3b;transform:scaleX(1.2746);transform-origin:0 0;">k/uploads/2022/04/an</div>
<div style="position:absolute;left:167.54px;top:508.50px;font-size:11.5px;line-height:14px;font-weight:400;color:#1d8a3b;letter-spacing:0.0px;white-space:pre;-webkit-text-stroke:0.28px #1d8a3b;transform:scaleX(1.2393);transform-origin:0 0;">ahtar-kelime.png</div>
<div style="position:absolute;left:170.57px;top:523.70px;font-size:9.5px;line-height:11px;font-weight:400;color:#4a4a4a;letter-spacing:0.0px;white-space:pre;-webkit-text-stroke:0.28px #4a4a4a;transform:scaleX(0.9160);transform-origin:0 0;-webkit-text-stroke:0.1px #4a4a4a;">Not crawled</div>
<div style="position:absolute;left:438.85px;top:478.40px;font-size:11.5px;line-height:14px;font-weight:400;color:#333;letter-spacing:0.0px;white-space:pre;-webkit-text-stroke:0.28px #333;transform:scaleX(1.0800);transform-origin:0 0;">4</div>
<div style="position:absolute;left:508.39px;top:479.40px;font-size:11.5px;line-height:14px;font-weight:400;color:#333;letter-spacing:0.0px;white-space:pre;-webkit-text-stroke:0.28px #333;transform:scaleX(1.2686);transform-origin:0 0;">6</div>
<div style="position:absolute;left:579.35px;top:478.40px;font-size:11.5px;line-height:14px;font-weight:400;color:#333;letter-spacing:0.0px;white-space:pre;-webkit-text-stroke:0.28px #333;transform:scaleX(1.0800);transform-origin:0 0;">5</div>
<div style="position:absolute;left:674.14px;top:479.40px;font-size:11.5px;line-height:14px;font-weight:400;color:#e0241b;letter-spacing:0.0px;white-space:pre;-webkit-text-stroke:0.28px #e0241b;transform:scaleX(0.8380);transform-origin:0 0;">−1</div>
<div style="position:absolute;left:741.57px;top:479.40px;font-size:11.5px;line-height:14px;font-weight:400;color:#1b4aa0;letter-spacing:0.0px;white-space:pre;-webkit-text-stroke:0.28px #1b4aa0;transform:scaleX(1.2674);transform-origin:0 0;">5</div>
<div style="position:absolute;left:806.26px;top:479.40px;font-size:11.5px;line-height:14px;font-weight:400;color:#333;letter-spacing:0.0px;white-space:pre;-webkit-text-stroke:0.28px #333;transform:scaleX(1.0166);transform-origin:0 0;">0</div>
<div style="position:absolute;left:875.36px;top:479.40px;font-size:11.5px;line-height:14px;font-weight:400;color:#333;letter-spacing:0.0px;white-space:pre;-webkit-text-stroke:0.28px #333;transform:scaleX(1.0166);transform-origin:0 0;">0</div>
<div style="position:absolute;left:953.57px;top:479.40px;font-size:11.5px;line-height:14px;font-weight:400;color:#333;letter-spacing:0.0px;white-space:pre;-webkit-text-stroke:0.28px #333;transform:scaleX(1.2024);transform-origin:0 0;">16 Jun 2023</div>
<div style="position:absolute;left:953.53px;top:493.90px;font-size:11.5px;line-height:14px;font-weight:400;color:#333;letter-spacing:0.0px;white-space:pre;-webkit-text-stroke:0.28px #333;transform:scaleX(1.2503);transform-origin:0 0;">26 Sep 2023</div>
<div style="position:absolute;left:167.51px;top:548.30px;font-size:11.5px;line-height:14px;font-weight:400;color:#1d8a3b;letter-spacing:0.0px;white-space:pre;-webkit-text-stroke:0.28px #1d8a3b;transform:scaleX(1.2890);transform-origin:0 0;">https://</div>
<div style="position:absolute;left:211.98px;top:548.30px;font-size:11.5px;line-height:14px;font-weight:700;color:#1d8a3b;letter-spacing:0.0px;white-space:pre;-webkit-text-stroke:0.0px #1d8a3b;transform:scaleX(1.1384);transform-origin:0 0;-webkit-text-stroke:0.3px #1d8a3b;">kriko.blog</div>
<div style="position:absolute;left:273.85px;top:548.30px;font-size:11.5px;line-height:14px;font-weight:400;color:#1d8a3b;letter-spacing:0.0px;white-space:pre;-webkit-text-stroke:0.28px #1d8a3b;transform:scaleX(1.3279);transform-origin:0 0;">/iceri</div>
<div style="position:absolute;left:167.54px;top:562.80px;font-size:11.5px;line-height:14px;font-weight:400;color:#1d8a3b;letter-spacing:0.0px;white-space:pre;-webkit-text-stroke:0.28px #1d8a3b;transform:scaleX(1.2298);transform-origin:0 0;">k/uploads/2021/12/goo</div>
<div style="position:absolute;left:167.53px;top:577.30px;font-size:11.5px;line-height:14px;font-weight:400;color:#1d8a3b;letter-spacing:0.0px;white-space:pre;-webkit-text-stroke:0.28px #1d8a3b;transform:scaleX(1.2552);transform-origin:0 0;">gle-benim-isletmem-yi</div>
<div style="position:absolute;left:438.85px;top:546.90px;font-size:11.5px;line-height:14px;font-weight:400;color:#333;letter-spacing:0.0px;white-space:pre;-webkit-text-stroke:0.28px #333;transform:scaleX(1.0800);transform-origin:0 0;">3</div>
<div style="position:absolute;left:500.24px;top:548.40px;font-size:11.5px;line-height:14px;font-weight:400;color:#333;letter-spacing:0.0px;white-space:pre;-webkit-text-stroke:0.28px #333;transform:scaleX(1.2715);transform-origin:0 0;">12</div>
<div style="position:absolute;left:579.35px;top:546.90px;font-size:11.5px;line-height:14px;font-weight:400;color:#333;letter-spacing:0.0px;white-space:pre;-webkit-text-stroke:0.28px #333;transform:scaleX(1.0800);transform-origin:0 0;">3</div>
<div style="position:absolute;left:741.57px;top:548.40px;font-size:11.5px;line-height:14px;font-weight:400;color:#1b4aa0;letter-spacing:0.0px;white-space:pre;-webkit-text-stroke:0.28px #1b4aa0;transform:scaleX(1.2674);transform-origin:0 0;">3</div>
<div style="position:absolute;left:806.26px;top:548.40px;font-size:11.5px;line-height:14px;font-weight:400;color:#333;letter-spacing:0.0px;white-space:pre;-webkit-text-stroke:0.28px #333;transform:scaleX(1.0166);transform-origin:0 0;">0</div>
<div style="position:absolute;left:875.36px;top:548.40px;font-size:11.5px;line-height:14px;font-weight:400;color:#333;letter-spacing:0.0px;white-space:pre;-webkit-text-stroke:0.28px #333;transform:scaleX(1.0166);transform-origin:0 0;">0</div>
<div style="position:absolute;left:953.52px;top:548.40px;font-size:11.5px;line-height:14px;font-weight:400;color:#333;letter-spacing:0.0px;white-space:pre;-webkit-text-stroke:0.28px #333;transform:scaleX(1.2643);transform-origin:0 0;">30 Jul 2023</div>
<div style="position:absolute;left:953.54px;top:563.00px;font-size:11.5px;line-height:14px;font-weight:400;color:#333;letter-spacing:0.0px;white-space:pre;-webkit-text-stroke:0.28px #333;transform:scaleX(1.2291);transform-origin:0 0;">7 d ago</div>
<div style="position:absolute;left:1172.54px;top:548.00px;font-size:19px;line-height:23px;font-weight:700;color:#fff;letter-spacing:0.0px;white-space:pre;-webkit-text-stroke:0.0px #fff;transform:scaleX(1.0936);transform-origin:0 0;">?</div>
<div style="position:absolute;left:0;top:587px;width:1200px;height:1px;background:#6a6a6a"></div><div style="position:absolute;left:0;top:588px;width:1200px;height:2px;background:#000"></div>
</body></html>
